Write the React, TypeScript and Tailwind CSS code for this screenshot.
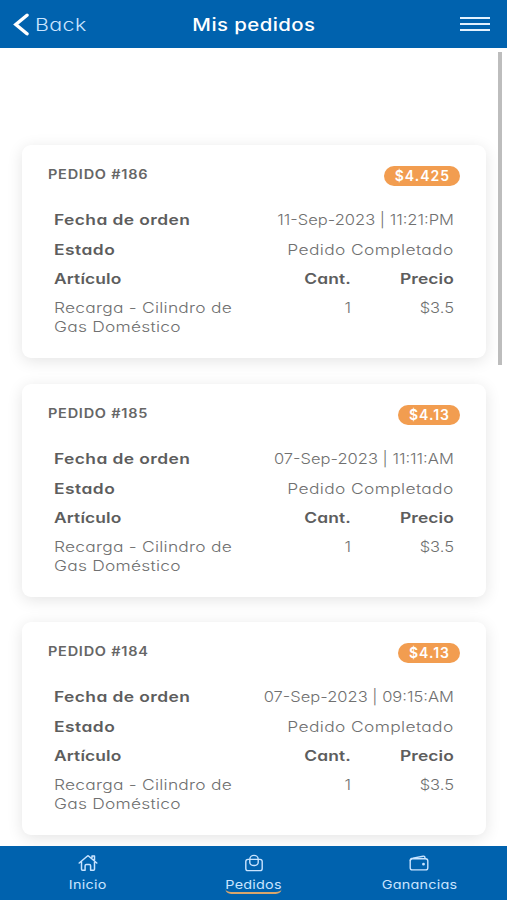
import React from 'react';

interface Order {
  id: number;
  total: string;
  date: string;
}

const orders: Order[] = [
  { id: 186, total: '$4.425', date: '11-Sep-2023 | 11:21:PM' },
  { id: 185, total: '$4.13', date: '07-Sep-2023 | 11:11:AM' },
  { id: 184, total: '$4.13', date: '07-Sep-2023 | 09:15:AM' },
];

const HomeIcon = () => (
  <svg width="20" height="18" viewBox="0 0 20 18" fill="none" stroke="currentColor" strokeWidth="1.5" strokeLinecap="round" strokeLinejoin="round">
    <path d="M1.2 9 9.2 2.2q.8-.7 1.6 0L18.8 9M3.5 8v7.2q0 1 1 1h2.6v-4.4q0-1.3 1.3-1.3h2.9q1.3 0 1.3 1.3v4.4h2.9q1 0 1-1V8M14 3.5V2h2.5v4" />
  </svg>
);

const BagIcon = () => (
  <svg width="20" height="18" viewBox="0 0 20 18" fill="none" stroke="currentColor" strokeWidth="1.4" strokeLinecap="round" strokeLinejoin="round">
    <rect x="1.8" y="5.4" width="16.4" height="11.2" rx="2.2" />
    <path d="M5.8 8.5V5.4a4.2 4 0 0 1 8.4 0v3.1a4.2 3 0 0 1-8.4 0" />
  </svg>
);

const WalletIcon = () => (
  <svg width="20" height="18" viewBox="0 0 20 18" fill="none" stroke="currentColor" strokeWidth="1.4" strokeLinecap="round" strokeLinejoin="round">
    <rect x="1.2" y="4.7" width="17.6" height="11.2" rx="2.2" />
    <path d="M1.3 6.5c0-1.6 1-2.2 2.5-2.4l10.4-1.9c1.2-.2 1.8.4 1.8 2.3" />
    <circle cx="14.5" cy="10.2" r=".7" fill="currentColor" />
  </svg>
);

const OrderCard: React.FC<{ order: Order }> = ({ order }) => (
  <article className="h-[213px] shrink-0 rounded-[9px] bg-white shadow-[0_3px_16px_rgba(0,0,0,0.11)]">
    <div className="flex h-[60px] items-start justify-between pt-[21px] pr-[26px] pl-[26px]">
      <h2 className="origin-left scale-x-[1.16] pt-px text-[12.5px] leading-4 font-semibold tracking-[0.65px]">PEDIDO #{order.id}</h2>
      <span className="flex h-5 items-center rounded-full bg-[#f29d50] pr-[10px] pb-px pl-[11px] text-[14px] font-semibold tracking-[1px] text-white">
        {order.total}
      </span>
    </div>
    <div className="flex flex-col pr-8 pl-8 text-[14.5px] text-[#707070]">
      <div className="flex h-[30px] justify-between leading-[30px]">
        <span className="origin-left scale-x-[1.2] font-semibold tracking-[0.35px] text-[#5d5d5d]">Fecha de orden</span>
        <span className="origin-right scale-x-[1.14] font-light">{order.date}</span>
      </div>
      <div className="flex h-[29px] justify-between leading-[29px]">
        <span className="origin-left scale-x-[1.2] font-semibold tracking-[0.4px] text-[#5d5d5d]">Estado</span>
        <span className="origin-right scale-x-[1.2] font-light tracking-[0.3px]">Pedido Completado</span>
      </div>
      <div className="grid h-[30px] grid-cols-[1fr_70px_103px] leading-[30px] font-semibold tracking-[0.1px] text-[#5d5d5d]">
        <span className="origin-left scale-x-[1.2]">Artículo</span>
        <span className="origin-right scale-x-[1.2] text-right">Cant.</span>
        <span className="origin-right scale-x-[1.2] text-right">Precio</span>
      </div>
      <div className="grid grid-cols-[1fr_70px_103px] pt-1 leading-[19px] font-light">
        <span className="origin-left scale-x-[1.2] tracking-[0.2px]">Recarga - Cilindro de<br />Gas Doméstico</span>
        <span className="origin-right scale-x-[1.14] text-right">1</span>
        <span className="origin-right scale-x-[1.14] text-right">$3.5</span>
      </div>
    </div>
  </article>
);

const tabs = [
  { label: 'Inicio', icon: HomeIcon, active: false },
  { label: 'Pedidos', icon: BagIcon, active: true },
  { label: 'Ganancias', icon: WalletIcon, active: false },
];

const App = () => (
  <div className="relative flex h-[900px] w-[507px] flex-col overflow-hidden bg-white font-['Inter',sans-serif] text-[#666] [font-feature-settings:'cv11']">
    <header className="grid h-12 shrink-0 grid-cols-3 items-center bg-[#0062ae] pr-[17px] pl-[13px] text-white">
      <button className="flex items-center gap-[6px] text-[17px] font-light tracking-[0.3px] text-[#cbe5ff]">
        <svg width="16" height="23" viewBox="0 0 16 23" fill="none" stroke="white" strokeWidth="3.4" strokeLinecap="round">
          <path d="M14 2.2 2.8 11.5 14 20.8" />
        </svg>
        <span className="origin-left scale-x-[1.26] pt-[3px]">Back</span>
      </button>
      <h1 className="scale-x-[1.2] pt-[4px] pl-1 text-center text-[17px] font-medium tracking-[0.35px]">Mis pedidos</h1>
      <button className="flex flex-col gap-1 justify-self-end" aria-label="Menu">
        <span className="h-[2px] w-[30px] bg-[#e3f2ff]" />
        <span className="h-[2px] w-[30px] bg-[#e3f2ff]" />
        <span className="h-[2px] w-[30px] bg-[#e3f2ff]" />
      </button>
    </header>
    <main className="flex min-h-0 flex-1 flex-col gap-[25.6px] overflow-hidden px-[22px] pt-[97px] pr-[21px]">
      {orders.map((order) => (
        <OrderCard key={order.id} order={order} />
      ))}
    </main>
    <div className="absolute top-[52px] right-[5px] h-[313px] w-1 bg-[#bdbdbd]" />
    <nav className="flex h-[54px] shrink-0 justify-between bg-[#0062ae] px-[5px] pt-2 text-[#c9e4ff]">
      {tabs.map(({ label, icon: Icon, active }) => (
        <button key={label} className="flex w-[166px] flex-col items-center">
          <Icon />
          <span className={`mt-[5px] h-[17px] scale-x-[1.2] text-[12px] leading-[15px] tracking-[0.2px] ${active ? 'rounded-b-[5px] border-b-2 border-[#d9a66c]' : ''}`}>{label}</span>
        </button>
      ))}
    </nav>
  </div>
);

export default App;
